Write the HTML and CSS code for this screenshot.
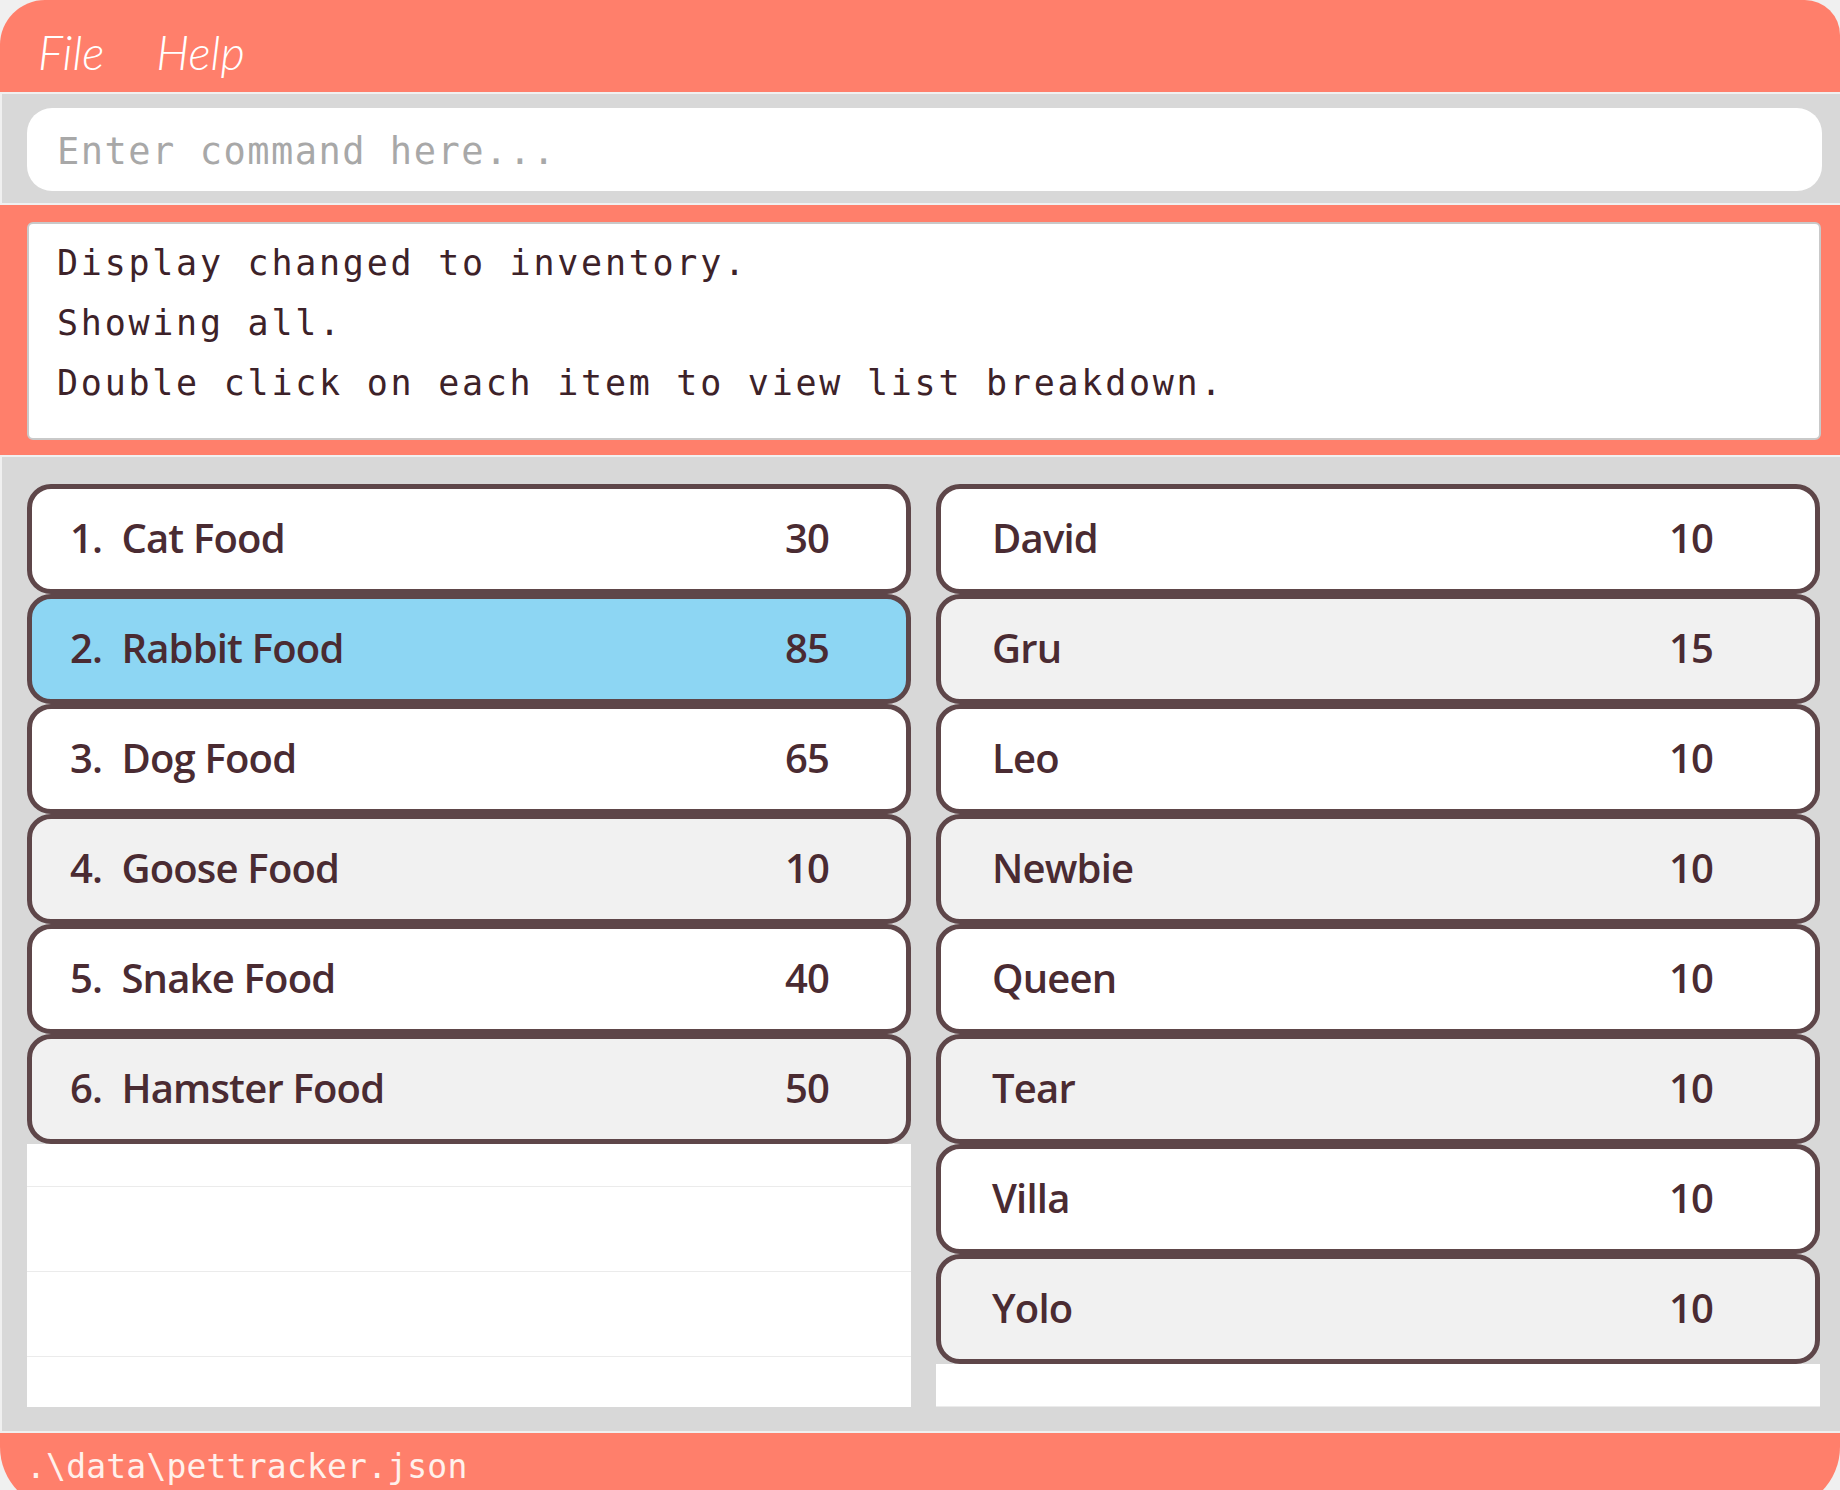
FILE: index.html
```html
<!DOCTYPE html>
<html lang="en">
<head>
<meta charset="utf-8">
<title>PetTracker</title>
<link rel="stylesheet" href="styles.css">
</head>
<body>
<div class="app">
  <div class="menubar">
    <span class="menu-item">File</span>
    <span class="menu-item">Help</span>
  </div>

  <div class="command-bar">
    <input class="command-input" type="text" placeholder="Enter command here...">
  </div>

  <div class="result-bar">
    <div class="result-box">
      <div class="result-line">Display changed to inventory.</div>
      <div class="result-line">Showing all.</div>
      <div class="result-line">Double click on each item to view list breakdown.</div>
    </div>
  </div>

  <div class="lists">
    <div class="list list-left">
      <div class="card"><span class="name">1.  Cat Food</span><span class="qty">30</span></div>
      <div class="card selected"><span class="name">2.  Rabbit Food</span><span class="qty">85</span></div>
      <div class="card"><span class="name">3.  Dog Food</span><span class="qty">65</span></div>
      <div class="card alt"><span class="name">4.  Goose Food</span><span class="qty">10</span></div>
      <div class="card"><span class="name">5.  Snake Food</span><span class="qty">40</span></div>
      <div class="card alt"><span class="name">6.  Hamster Food</span><span class="qty">50</span></div>
      <div class="empty-area">
        <div class="empty-cell first"></div>
        <div class="empty-cell"></div>
        <div class="empty-cell"></div>
        <div class="empty-cell last"></div>
      </div>
    </div>

    <div class="list list-right">
      <div class="card"><span class="name">David</span><span class="qty">10</span></div>
      <div class="card alt"><span class="name">Gru</span><span class="qty">15</span></div>
      <div class="card"><span class="name">Leo</span><span class="qty">10</span></div>
      <div class="card alt"><span class="name">Newbie</span><span class="qty">10</span></div>
      <div class="card"><span class="name">Queen</span><span class="qty">10</span></div>
      <div class="card alt"><span class="name">Tear</span><span class="qty">10</span></div>
      <div class="card"><span class="name">Villa</span><span class="qty">10</span></div>
      <div class="card alt"><span class="name">Yolo</span><span class="qty">10</span></div>
      <div class="empty-area short"></div>
    </div>
  </div>

  <div class="status">.\data\pettracker.json</div>
</div>
</body>
</html>
```

FILE: styles.css
```css
html, body {
  margin: 0;
  padding: 0;
  background: #f0f0f0;
  overflow: hidden;
}

.app {
  width: 1840px;
  display: flex;
  flex-direction: column;
}

.app > * {
  flex-shrink: 0;
}

/* ---------- menu bar ---------- */
.menubar {
  height: 92px;
  box-sizing: border-box;
  background: #ff7f6b;
  border-radius: 45px 35px 0 0;
  padding: 24px 0 0 38px;
  display: flex;
  gap: 52px;
}

.menu-item {
  font-family: "Lato", "DejaVu Sans", sans-serif;
  font-style: italic;
  font-weight: 300;
  font-size: 47px;
  line-height: normal;
  color: #ffffff;
}

/* ---------- command bar ---------- */
.command-bar {
  margin-top: 2px;
  height: 109px;
  box-sizing: border-box;
  background: #d8d8d8;
  border-left: 2px solid #f0f0f0;
  padding: 14px 18px 12px 25px;
}

.command-input {
  display: block;
  width: 100%;
  height: 83px;
  box-sizing: border-box;
  border: none;
  outline: none;
  border-radius: 25px;
  background: #ffffff;
  padding: 4px 0 0 30px;
  font-family: "DejaVu Sans Mono", monospace;
  font-size: 37px;
  letter-spacing: 1.5px;
  color: #4a2b32;
}

.command-input::placeholder {
  color: #a8a8a8;
}

/* ---------- result display ---------- */
.result-bar {
  margin-top: 2px;
  height: 250px;
  box-sizing: border-box;
  background: #ff7f6b;
  padding: 17px 19px 15px 27px;
}

.result-box {
  height: 218px;
  box-sizing: border-box;
  background: #ffffff;
  border: 2px solid #c9c9c9;
  border-radius: 6px;
  padding: 9px 0 0 28px;
  font-family: "DejaVu Sans Mono", monospace;
  font-size: 35px;
  letter-spacing: 2.75px;
  line-height: 60px;
  color: #3d2229;
}

.result-line {
  white-space: pre;
}

/* ---------- lists ---------- */
.lists {
  margin-top: 2px;
  height: 974px;
  box-sizing: border-box;
  background: #d8d8d8;
  border-left: 2px solid #f0f0f0;
  padding: 27px 20px 0 25px;
  display: grid;
  grid-template-columns: 1fr 1fr;
  column-gap: 25px;
  align-items: start;
}

.list {
  display: flex;
  flex-direction: column;
}

.card {
  height: 110px;
  box-sizing: border-box;
  display: flex;
  align-items: center;
  padding-bottom: 3px;
  background: #ffffff;
  border: 5px solid #5e4649;
  border-radius: 24px;
  font-family: "Open Sans", "Noto Sans", sans-serif;
  font-weight: 600;
  font-size: 40px;
  letter-spacing: -0.8px;
  color: #4a2b32;
}

.card.alt {
  background: #f1f1f1;
}

.card.selected {
  background: #8dd6f3;
}

.name {
  flex: 1;
  white-space: pre;
}

.list-left .card {
  padding-left: 38px;
}

.list-left .qty {
  width: 121px;
}

.list-right .card {
  padding-left: 51px;
}

.list-right .qty {
  width: 146px;
}

.empty-area {
  background: #ffffff;
  display: flex;
  flex-direction: column;
}

.empty-cell {
  height: 85px;
  box-sizing: border-box;
  border-top: 1px solid #ebebeb;
}

.empty-cell.first {
  height: 42px;
  border-top: none;
}

.empty-cell.last {
  height: 51px;
}

.empty-area.short {
  height: 43px;
  box-sizing: border-box;
  border-bottom: 1px solid #ebebeb;
}

/* ---------- status bar ---------- */
.status {
  margin-top: 2px;
  height: 77px;
  box-sizing: border-box;
  background: #ff7f6b;
  border-radius: 0 0 63px 63px;
  padding: 14px 0 0 26px;
  font-family: "DejaVu Sans Mono", monospace;
  font-size: 33px;
  letter-spacing: 0.2px;
  color: #fff1ec;
}
```
